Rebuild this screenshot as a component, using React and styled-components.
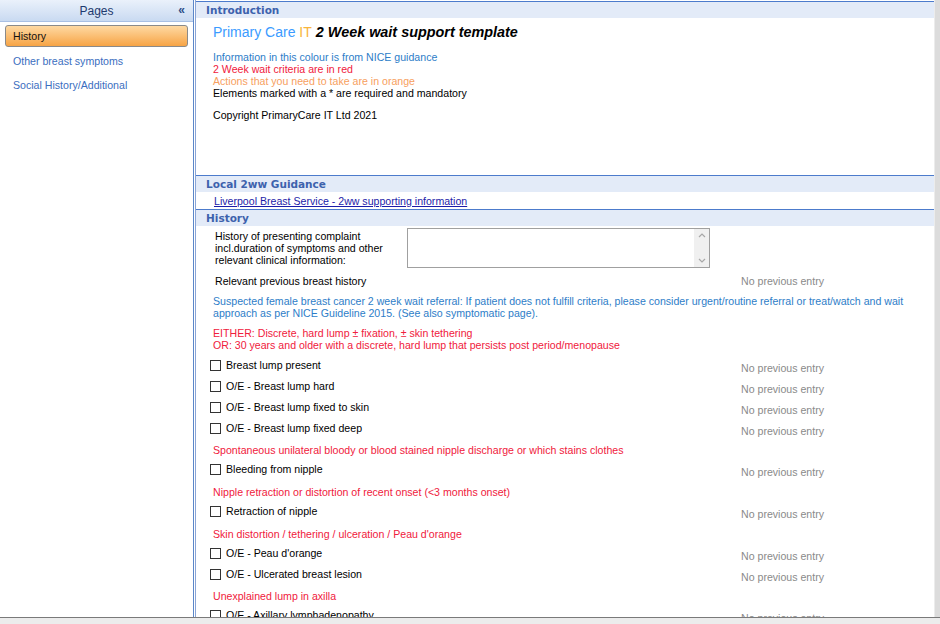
import React from "react";
import styled, { createGlobalStyle } from "styled-components";

const GlobalStyle = createGlobalStyle`
  html, body {
    margin: 0;
    padding: 0;
    background: #ececec;
  }
  body {
    font-family: "Liberation Sans", Arial, sans-serif;
    font-size: 10.6px;
    color: #000;
  }
  * {
    box-sizing: border-box;
  }
`;

const Frame = styled.div`
  width: 940px;
  height: 618px;
  display: flex;
  border-bottom: 1px solid #7a7a7a;
  background: #fff;
  overflow: hidden;
`;

const Sidebar = styled.div`
  width: 194px;
  flex-shrink: 0;
  border-right: 1px solid #5b87c9;
  display: flex;
  flex-direction: column;
  background: #fff;
`;

const SideHeader = styled.div`
  height: 22px;
  position: relative;
  display: flex;
  align-items: center;
  justify-content: center;
  background: linear-gradient(#eaf1fb, #c9daf1);
  border-bottom: 1px solid #a9c0e4;
  color: #1e3a6e;
  font-size: 12px;
`;

const Collapse = styled.span`
  position: absolute;
  right: 8px;
  top: 3px;
  font-size: 12px;
  font-weight: bold;
  color: #2b4c86;
`;

const PageList = styled.div`
  display: flex;
  flex-direction: column;
  padding: 3px 5px 0 5px;
`;

const PageItem = styled.div`
  height: ${(p) => (p.$active ? "22px" : "24px")};
  display: flex;
  align-items: center;
  padding-left: 7px;
  color: ${(p) => (p.$active ? "#111" : "#3b6ec0")};
  border-radius: 3px;
  border: ${(p) => (p.$active ? "1px solid #8a8a8a" : "1px solid transparent")};
  background: ${(p) =>
    p.$active ? "linear-gradient(#fed9a3, #f7a445)" : "transparent"};
  margin-bottom: ${(p) => (p.$active ? "2px" : "0")};
`;

const Main = styled.div`
  flex: 1;
  display: flex;
  border-left: 1px solid #8aa5d6;
  margin-left: 1px;
`;

const Content = styled.div`
  flex: 1;
  display: flex;
  flex-direction: column;
  overflow: hidden;
  padding-top: 1px;
`;

const ScrollTrack = styled.div`
  width: 6px;
  flex-shrink: 0;
  background: #dcdcdc;
  border-left: 1px solid #ececec;
`;

const SectionHeader = styled.div`
  height: 17px;
  flex-shrink: 0;
  display: flex;
  align-items: center;
  padding-left: 10px;
  background: #e3ebf8;
  border-top: 1px solid #4c7bcc;
  color: #3d62ad;
  font-weight: bold;
  font-family: "DejaVu Sans", Verdana, sans-serif;
  font-size: 10.5px;
`;

const IntroBody = styled.div`
  height: 157px;
  flex-shrink: 0;
  padding: 6px 0 0 17px;
  display: flex;
  flex-direction: column;
`;

const Title = styled.div`
  display: flex;
  align-items: baseline;
  gap: 4px;
  height: 18px;
  margin-bottom: 9px;
`;

const Brand = styled.span`
  font-size: 14px;
  color: #3b9bff;
`;

const BrandIT = styled.span`
  color: #f9b53c;
`;

const TitleText = styled.span`
  font-size: 14.4px;
  font-weight: bold;
  font-style: italic;
`;

const Line = styled.div`
  line-height: 12px;
  color: ${(p) => p.$color || "#000"};
  margin-top: ${(p) => p.$gap || 0}px;
`;

const LinkRow = styled.div`
  height: 17px;
  flex-shrink: 0;
  display: flex;
  align-items: center;
  padding-left: 18px;
`;

const Link = styled.a`
  color: #1c1ca8;
  text-decoration: underline;
`;

const HistoryBody = styled.div`
  display: flex;
  flex-direction: column;
  padding-top: 2px;
`;

const FieldRow = styled.div`
  display: grid;
  grid-template-columns: 192px 303px;
  padding-left: 19px;
`;

const FieldLabel = styled.div`
  line-height: 12px;
  padding-top: 2px;
`;

const TextBox = styled.div`
  height: 40px;
  border: 1px solid #a0a0a0;
  display: flex;
  justify-content: flex-end;
`;

const BoxScroll = styled.div`
  width: 15px;
  background: #f0f0f0;
  display: flex;
  flex-direction: column;
  justify-content: space-between;
  align-items: center;
  color: #a8a8a8;
  padding: 3px 0;
`;

const Arrow = styled.svg`
  width: 8px;
  height: 6px;
`;

const EntryRow = styled.div`
  display: grid;
  grid-template-columns: 1fr 193px;
  height: 21px;
  flex-shrink: 0;
  align-items: start;
  margin-top: ${(p) => p.$mt || 0}px;
`;

const EntryLeft = styled.div`
  display: flex;
  align-items: center;
  gap: 5px;
  padding-left: ${(p) => (p.$plain ? 19 : 14)}px;
  height: 16px;
`;

const Box = styled.span`
  width: 11px;
  height: 11px;
  border: 1px solid #333;
  background: #fff;
`;

const NoEntry = styled.div`
  color: #8a8a8a;
  padding-top: ${(p) => (p.$flat ? 2 : 5)}px;
`;

const Note = styled.div`
  padding-left: 17px;
  padding-right: 14px;
  line-height: 12px;
  flex-shrink: 0;
  color: ${(p) => p.$color};
  margin: ${(p) => p.$m || "3px 0 5px 0"};
`;

const BLUE = "#2d7dc8";
const RED = "#f0203c";

function Entry({ label }) {
  return (
    <EntryRow>
      <EntryLeft>
        <Box />
        <span>{label}</span>
      </EntryLeft>
      <NoEntry>No previous entry</NoEntry>
    </EntryRow>
  );
}

export default function App() {
  return (
    <>
      <GlobalStyle />
      <Frame>
        <Sidebar>
          <SideHeader>
            Pages
            <Collapse>«</Collapse>
          </SideHeader>
          <PageList>
            <PageItem $active>History</PageItem>
            <PageItem>Other breast symptoms</PageItem>
            <PageItem>Social History/Additional</PageItem>
          </PageList>
        </Sidebar>
        <Main>
          <Content>
            <SectionHeader>Introduction</SectionHeader>
            <IntroBody>
              <Title>
                <Brand>
                  Primary Care <BrandIT>IT</BrandIT>
                </Brand>
                <TitleText>2 Week wait support template</TitleText>
              </Title>
              <Line $color={BLUE}>Information in this colour is from NICE guidance</Line>
              <Line $color={RED}>2 Week wait criteria are in red</Line>
              <Line $color="#f7a060">Actions that you need to take are in orange</Line>
              <Line>Elements marked with a * are required and mandatory</Line>
              <Line $gap={10}>Copyright PrimaryCare IT Ltd 2021</Line>
            </IntroBody>
            <SectionHeader>Local 2ww Guidance</SectionHeader>
            <LinkRow>
              <Link>Liverpool Breast Service - 2ww supporting information</Link>
            </LinkRow>
            <SectionHeader>History</SectionHeader>
            <HistoryBody>
              <FieldRow>
                <FieldLabel>
                  History of presenting complaint incl.duration of symptoms and other
                  relevant clinical information:
                </FieldLabel>
                <TextBox>
                  <BoxScroll>
                    <Arrow viewBox="0 0 8 6">
                      <path d="M1 5 L4 2 L7 5" fill="none" stroke="currentColor" strokeWidth="1.2" />
                    </Arrow>
                    <Arrow viewBox="0 0 8 6">
                      <path d="M1 1 L4 4 L7 1" fill="none" stroke="currentColor" strokeWidth="1.2" />
                    </Arrow>
                  </BoxScroll>
                </TextBox>
              </FieldRow>
              <EntryRow $mt={5}>
                <EntryLeft $plain>Relevant previous breast history</EntryLeft>
                <NoEntry $flat>No previous entry</NoEntry>
              </EntryRow>
              <Note $color={BLUE} $m="1px 0 8px 0">
                Suspected female breast cancer 2 week wait referral: If patient does not fulfill
                criteria, please consider urgent/routine referral or treat/watch and wait approach
                as per NICE Guideline 2015. (See also symptomatic page).
              </Note>
              <Note $color={RED} $m="0">
                EITHER: Discrete, hard lump ± fixation, ± skin tethering
              </Note>
              <Note $color={RED} $m="0 0 6px 0">
                OR: 30 years and older with a discrete, hard lump that persists post period/menopause
              </Note>
              <Entry label="Breast lump present" />
              <Entry label="O/E - Breast lump hard" />
              <Entry label="O/E - Breast lump fixed to skin" />
              <Entry label="O/E - Breast lump fixed deep" />
              <Note $color={RED}>
                Spontaneous unilateral bloody or blood stained nipple discharge or which stains clothes
              </Note>
              <Entry label="Bleeding from nipple" />
              <Note $color={RED} $m="4px 0 5px 0">
                Nipple retraction or distortion of recent onset (&lt;3 months onset)
              </Note>
              <Entry label="Retraction of nipple" />
              <Note $color={RED} $m="4px 0 5px 0">
                Skin distortion / tethering / ulceration / Peau d'orange
              </Note>
              <Entry label="O/E - Peau d'orange" />
              <Entry label="O/E - Ulcerated breast lesion" />
              <Note $color={RED}>Unexplained lump in axilla</Note>
              <Entry label="O/E - Axillary lymphadenopathy" />
            </HistoryBody>
          </Content>
          <ScrollTrack />
        </Main>
      </Frame>
    </>
  );
}
